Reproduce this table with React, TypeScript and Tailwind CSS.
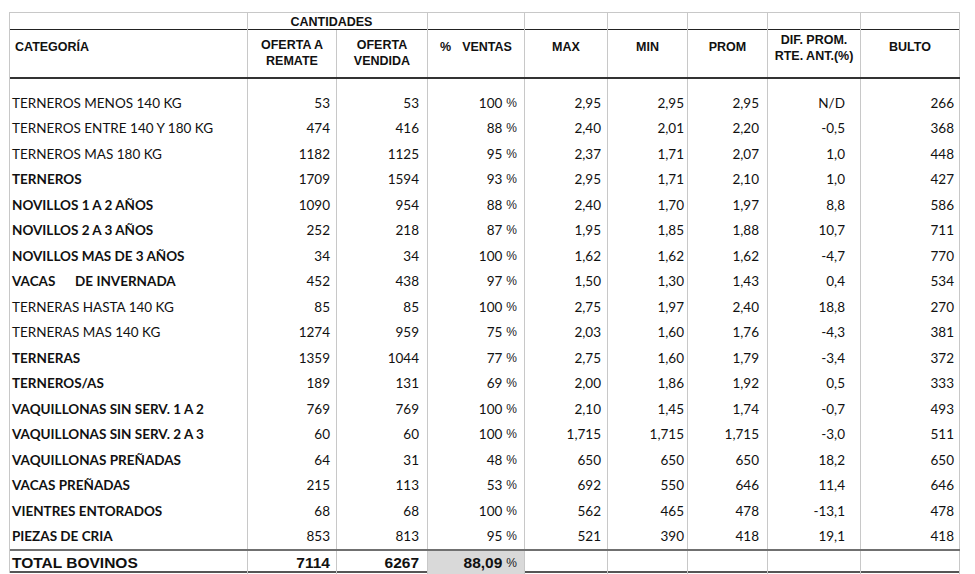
const cols = "grid grid-cols-[238px_89px_91px_97px_83px_80px_80px_93px_99px]";

type Row = {
  label: string;
  bold?: boolean;
  remate: string;
  vendida: string;
  pct: string;
  max: string;
  min: string;
  prom: string;
  dif: string;
  bulto: string;
};

const rows: Row[] = [
  { label: "TERNEROS MENOS 140 KG", remate: "53", vendida: "53", pct: "100", max: "2,95", min: "2,95", prom: "2,95", dif: "N/D", bulto: "266" },
  { label: "TERNEROS ENTRE 140 Y 180 KG", remate: "474", vendida: "416", pct: "88", max: "2,40", min: "2,01", prom: "2,20", dif: "-0,5", bulto: "368" },
  { label: "TERNEROS MAS 180 KG", remate: "1182", vendida: "1125", pct: "95", max: "2,37", min: "1,71", prom: "2,07", dif: "1,0", bulto: "448" },
  { label: "TERNEROS", bold: true, remate: "1709", vendida: "1594", pct: "93", max: "2,95", min: "1,71", prom: "2,10", dif: "1,0", bulto: "427" },
  { label: "NOVILLOS 1 A 2 AÑOS", bold: true, remate: "1090", vendida: "954", pct: "88", max: "2,40", min: "1,70", prom: "1,97", dif: "8,8", bulto: "586" },
  { label: "NOVILLOS 2 A 3 AÑOS", bold: true, remate: "252", vendida: "218", pct: "87", max: "1,95", min: "1,85", prom: "1,88", dif: "10,7", bulto: "711" },
  { label: "NOVILLOS MAS DE 3 AÑOS", bold: true, remate: "34", vendida: "34", pct: "100", max: "1,62", min: "1,62", prom: "1,62", dif: "-4,7", bulto: "770" },
  { label: "VACAS\u00a0\u00a0\u00a0\u00a0\u00a0\u00a0DE INVERNADA", bold: true, remate: "452", vendida: "438", pct: "97", max: "1,50", min: "1,30", prom: "1,43", dif: "0,4", bulto: "534" },
  { label: "TERNERAS HASTA 140 KG", remate: "85", vendida: "85", pct: "100", max: "2,75", min: "1,97", prom: "2,40", dif: "18,8", bulto: "270" },
  { label: "TERNERAS MAS 140 KG", remate: "1274", vendida: "959", pct: "75", max: "2,03", min: "1,60", prom: "1,76", dif: "-4,3", bulto: "381" },
  { label: "TERNERAS", bold: true, remate: "1359", vendida: "1044", pct: "77", max: "2,75", min: "1,60", prom: "1,79", dif: "-3,4", bulto: "372" },
  { label: "TERNEROS/AS", bold: true, remate: "189", vendida: "131", pct: "69", max: "2,00", min: "1,86", prom: "1,92", dif: "0,5", bulto: "333" },
  { label: "VAQUILLONAS SIN SERV. 1 A 2", bold: true, remate: "769", vendida: "769", pct: "100", max: "2,10", min: "1,45", prom: "1,74", dif: "-0,7", bulto: "493" },
  { label: "VAQUILLONAS SIN SERV. 2 A 3", bold: true, remate: "60", vendida: "60", pct: "100", max: "1,715", min: "1,715", prom: "1,715", dif: "-3,0", bulto: "511" },
  { label: "VAQUILLONAS PREÑADAS", bold: true, remate: "64", vendida: "31", pct: "48", max: "650", min: "650", prom: "650", dif: "18,2", bulto: "650" },
  { label: "VACAS PREÑADAS", bold: true, remate: "215", vendida: "113", pct: "53", max: "692", min: "550", prom: "646", dif: "11,4", bulto: "646" },
  { label: "VIENTRES ENTORADOS", bold: true, remate: "68", vendida: "68", pct: "100", max: "562", min: "465", prom: "478", dif: "-13,1", bulto: "478" },
  { label: "PIEZAS DE CRIA", bold: true, remate: "853", vendida: "813", pct: "95", max: "521", min: "390", prom: "418", dif: "19,1", bulto: "418" },
];

const line = "border-r border-[#c8c8c8]";
const num = `${line} flex items-center justify-end`;

function Pct({ value, bold }: { value: string; bold?: boolean }) {
  return (
    <>
      <span className={bold ? "font-['Liberation_Sans',sans-serif] text-[15.5px] font-bold" : ""}>{value}</span>
      <span className="ml-[4px] font-['Liberation_Sans',sans-serif] text-[12px] text-[#222]">%</span>
    </>
  );
}

export default function App() {
  return (
    <div className="min-h-[574px] w-[975px] bg-white pt-[12px] text-black">
      <div className="ml-[9px] w-[951px] border-l border-t border-[#c8c8c8] font-['Lato',sans-serif] text-[13.5px] text-[#111]">
        {/* fila CANTIDADES */}
        <div className={`${cols} h-[17px] border-b border-[#222] font-['Liberation_Sans',sans-serif] text-[12.5px] font-bold`}>
          <div className={line} />
          <div className={`${line} col-span-2 flex items-center justify-center pr-[12px]`}>CANTIDADES</div>
          <div className={line} />
          <div className={line} />
          <div className={line} />
          <div className={line} />
          <div className={line} />
          <div className={line} />
        </div>

        {/* encabezado */}
        <div className={`${cols} h-[49px] border-b-2 border-[#333] font-['Liberation_Sans',sans-serif] text-[12.5px] font-bold leading-[16px]`}>
          <div className={`${line} pl-[5px] pt-[9px]`}>CATEGORÍA</div>
          <div className={`${line} pt-[7px] text-center`}>OFERTA A<br />REMATE</div>
          <div className={`${line} pt-[7px] text-center`}>OFERTA<br />VENDIDA</div>
          <div className={`${line} flex justify-center pt-[9px]`}>
            <span>%</span>
            <span className="ml-[11px]">VENTAS</span>
          </div>
          <div className={`${line} pt-[9px] text-center`}>MAX</div>
          <div className={`${line} pt-[9px] text-center`}>MIN</div>
          <div className={`${line} pt-[9px] text-center`}>PROM</div>
          <div className={`${line} pt-[2px] text-center`}>DIF. PROM.<br />RTE. ANT.(%)</div>
          <div className={`${line} pt-[9px] text-center`}>BULTO</div>
        </div>

        {/* separador vacío */}
        <div className={`${cols} h-[11px]`}>
          {Array.from({ length: 9 }).map((_, i) => (
            <div key={i} className={line} />
          ))}
        </div>

        {rows.map((r) => (
          <div key={r.label} className={`${cols} h-[25.5px]`}>
            <div className={`${line} flex items-center whitespace-pre pl-[2px] ${r.bold ? "font-bold" : ""}`}>{r.label}</div>
            <div className={`${num} pr-[6px]`}>{r.remate}</div>
            <div className={`${num} pr-[8px]`}>{r.vendida}</div>
            <div className={`${num} pr-[7px]`}>
              <Pct value={r.pct} />
            </div>
            <div className={`${num} pr-[6px]`}>{r.max}</div>
            <div className={`${num} pr-[3px]`}>{r.min}</div>
            <div className={`${num} pr-[8px]`}>{r.prom}</div>
            <div className={`${num} pr-[15px]`}>{r.dif}</div>
            <div className={`${num} pr-[5px]`}>{r.bulto}</div>
          </div>
        ))}

        {/* total */}
        <div className={`${cols} h-[24px] border-y-2 border-t-[#707070] border-b-[#555]`}>
          <div className={`${line} flex items-center pl-[2px] font-['Liberation_Sans',sans-serif] text-[15.5px] font-bold`}>TOTAL BOVINOS</div>
          <div className={`${num} pr-[6px] font-['Liberation_Sans',sans-serif] text-[15.5px] font-bold`}>7114</div>
          <div className={`${num} pr-[8px] font-['Liberation_Sans',sans-serif] text-[15.5px] font-bold`}>6267</div>
          <div className={`${num} bg-[#d9d9d9] pr-[7px]`}>
            <Pct value="88,09" bold />
          </div>
          <div className={line} />
          <div className={line} />
          <div className={line} />
          <div className={line} />
          <div className={line} />
        </div>
      </div>
    </div>
  );
}
